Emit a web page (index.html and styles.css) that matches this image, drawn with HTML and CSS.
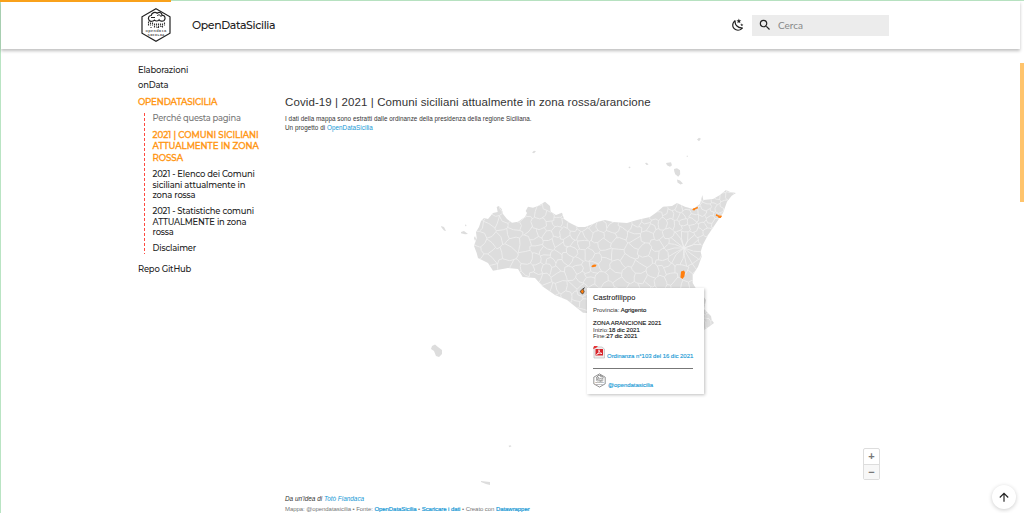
FILE: index.html
```html
<!DOCTYPE html>
<html lang="it">
<head>
<meta charset="utf-8">
<title>OpenDataSicilia</title>
<link rel="stylesheet" href="styles.css">
</head>
<body>
<svg width="0" height="0" class="defs"><defs>
<symbol id="ods" viewBox="0 0 32 36">
<path d="M16 1.800 30 9.800v16.400L16 34.200 2 26.200V9.800z" fill="#fff" stroke="#222" stroke-width="1.200"/>
<path d="M9.200 13.500c-1.800-2.500-.2-5 2-5 .5-3 4-4 6-2.300 2.500-1.800 5 .1 4.700 2.300 3.200-.6 4 3 2.200 5-1.500 1.200-4 .6-5-.7-1.400 1.600-3.500 1.500-4.700.3-1.500 1.500-4 1.500-5.200.4z" fill="#fff" stroke="#222" stroke-width="1.200"/>
<path d="M11 10.500h4m2-1.500c1.500-2 4-1 4 1" fill="none" stroke="#222" stroke-width="1"/>
<path d="M8.500 14.500v4m2-3v3m2-3v3m2-2v4m2-4v3m2-3v5m2-5v3m2-3v4m2-5v3M11 20v1m6-1v1m4-2v1" stroke="#333" stroke-width="1.100" stroke-dasharray="2 .5"/>
<text x="5.500" y="24.800" textLength="21" class="logo-text">opendata</text>
<text x="7.500" y="28.500" textLength="17" class="logo-text">SICILIA</text>
</symbol></defs></svg>
<div class="progress"></div>
<header class="header"><div class="header-inner">
<svg class="logo" width="32" height="36"><use href="#ods"/></svg>
<span class="site-title">OpenDataSicilia</span>
<svg class="moon" viewBox="0 0 24 24"><path d="m17.750 4.090-2.530 1.940.91 3.060-2.630-1.810-2.630 1.810.91-3.060-2.530-1.940L12.440 4l1.060-3 1.060 3 3.190.09m3.500 6.910-1.640 1.250.59 1.980-1.700-1.170-1.700 1.170.59-1.980L15.750 11l2.060-.05L18.500 9l.69 1.950 2.060.05m-2.280 4.950c.83-.08 1.720 1.100 1.190 1.850-.32.45-.66.87-1.080 1.270C15.170 23 8.840 23 4.940 19.070c-3.910-3.900-3.910-10.240 0-14.140.4-.4.820-.76 1.270-1.080.75-.53 1.930.36 1.850 1.190-.27 2.860.69 5.830 2.890 8.020a9.960 9.960 0 0 0 8.020 2.890m-1.640 2.020a12.080 12.080 0 0 1-7.800-3.470c-2.170-2.190-3.330-5-3.490-7.820-2.810 3.140-2.700 7.960.31 10.980 3.020 3.010 7.840 3.120 10.980.31z"/></svg>
<div class="search"><svg viewBox="0 0 24 24"><path d="M9.500 3A6.500 6.500 0 0 1 16 9.500c0 1.610-.59 3.090-1.560 4.230l.27.270h.79l5 5-1.500 1.500-5-5v-.79l-.27-.27A6.516 6.516 0 0 1 9.500 16a6.500 6.500 0 0 1 0-13m0 2C7 5 5 7 5 9.500S7 14 9.500 14 14 12 14 9.500 12 5 9.500 5z"/></svg><span>Cerca</span></div>
</div></header>
<main class="main">
<nav class="nav">
<a>Elaborazioni</a><a class="w2">onData</a><a class="active w3">OPENDATASICILIA</a>
<div class="subnav">
<a class="muted">Perché questa pagina</a>
<a class="active current">2021 | COMUNI SICILIANI<br>ATTUALMENTE IN ZONA<br>ROSSA</a>
<a class="elenco">2021 - Elenco dei Comuni<br>siciliani attualmente in<br>zona rossa</a>
<a class="stats">2021 - Statistiche comuni<br>ATTUALMENTE in zona<br>rossa</a>
<a class="disc">Disclaimer</a>
</div>
<a class="repo">Repo GitHub</a>
</nav>
<section class="chart">
<h1>Covid-19 | 2021 | Comuni siciliani attualmente in zona rossa/arancione</h1>
<p class="intro">I dati della mappa sono estratti dalle ordinanze della presidenza della regione Siciliana.<br>Un progetto di <a>OpenDataSicilia</a></p>
<div class="map">
<svg class="sicily" viewBox="285 135 600 355" width="600" height="355">
<defs><clipPath id="coast"><path id="coastPath" d="M474 246L476.700 238 476 232 479 227 481 221 484 218 488 219 493 213 497.700 212 496.700 207 498.700 206 501.700 209 503 214 507 219 512 222.700 518 221.700 525 217 527 213 525.700 211 528 206.700 533 207.700 538 206 545 201.700 550 206 550.700 211.700 556 215 562 212.700 564 219 570 223 578 227 585 227 593 224 598 221.700 605 220 613 222 627 223 637 220 650 217 657 212 663 206.700 672 206 677 203 685 206.700 693 209 700 204 702.300 195 703.300 200 713 199 720 195 726 190 730 192 736 193 731.700 195.700 727 201.700 723 213 717 221.700 708 235 702.700 245 700.700 251.700 701.700 256.700 698 266.700 692.700 275 692.700 283 698 292 703 296 706 300 704 309 711 316 711.700 320 714 323 709 326.700 704 330 696 347 687 359 678 353 650 347 633 338 609 319 587 313 583 312.700 577 308 567 300 555 295 543 286.700 535 278 522.700 277 518 269 508 268 493 270.700 488 263 478 258 476.700 253Z"/></clipPath></defs>
<use href="#coastPath" class="land"/>
<g clip-path="url(#coast)"><path id="borders" class="borders"/></g>
<g class="land">
<path d="M441 226l3 1 2 4-2-.5-2.500-3zM461 232l3-1 4 3-3 .3-4-1zM465 224.500l1.500.5-.5 1.500-1-1zM475 236l1 3-1 2-1-3zM532 152.500l2-1.800 2 .5-2 2zM628.500 167l1.500-.5.500 1.500-1.500.3zM645 163l2-.3 1.500 2-2 .3zM666 163l5-.8 1 3-2 1.500-3-1.500zM674 169l3-.8 3 2 .2 4-2 2.500-3-2.500-1-3zM677 179.500l3 1 3 3-2.500 1-3-2zM686.500 156l1-.5.500 1-1 .6zM697 139.500l2-1.700 2 1-2 2.500zM432 346l3-1.500 3 2.500 4 3v4l-3 3-3-1-2-5-3-2zM508.500 445.800l2-.5 1 1-2 .9zM481 481l9 1v3l-4-1-5-2z"/></g>
<g class="zone"><path d="M592 265.500l2-1 2.500.3-.6 1.700-3 .8-1.500-.3zM693 208.500l2.500-.8 2.300-1.200v2l-2 .5-1.500 1.500-2-.5zM716.300 214l2.700 1.500 3.200.3-1.500 2.200h-2l-1-1.500-2-.8zM681 271.500l3-1 1 2-.6 4-2 2.500-2-1.500z"/></g>
<path class="selected" d="M584.500 287.800l-1.500 1 1.200 3-1.500 2.200-1.500-1-1-1.800 2-1.700z"/>
</svg>
<div class="tooltip">
<h2>Castrofilippo</h2>
<p class="province">Provincia: <b>Agrigento</b></p>
<p class="dates"><b>ZONA ARANCIONE 2021</b><br>Inizio:<b>18 dic 2021</b><br>Fine:<b>27 dic 2021</b></p>
<div class="link-row"><svg width="12" height="14" viewBox="0 0 12 14"><path d="M1 2h8l2.500 2v9H1z" fill="#eee" stroke="#bbb" stroke-width=".7"/><path d="M2.500 4h7.500v6.500H2.500z" fill="#d8242b"/><path d="M0 4l1-3h4L3 3z" fill="#e63336"/><path d="M3.500 9.500c2-1 3-3 2.500-4.800C5.500 6 7 8.500 9 8.500c-2-.8-4 0-5.500 1z" fill="none" stroke="#fff" stroke-width=".8"/></svg><a>Ordinanza n°103 del 16 dic 2021</a></div>
<hr>
<div class="link-row second"><svg width="13" height="15"><use href="#ods"/></svg><a>@opendatasicilia</a></div>
</div>
<div class="zoom"><span>+</span><span>−</span></div>
</div>
<footer><p class="idea">Da un'idea di <a>Totò Fiandaca</a></p><p class="credits">Mappa: @opendatasicilia • Fonte: <a>OpenDataSicilia</a> • <a>Scaricare i dati</a> • Creato con <a>Datawrapper</a></p></footer>
</section>
</main>
<div class="scrollbar"></div>
<div class="top"><svg viewBox="0 0 24 24"><path d="M13 20h-2V8l-5.500 5.500-1.420-1.420L12 4.160l7.920 7.920-1.420 1.420L13 8v12z"/></svg></div>
<script src="map.js"></script>
</body>
</html>
```
FILE: styles.css
```css
* { box-sizing: border-box; }
body { margin: 0; padding: 1px 0 0 1px; width: 1024px; height: 513px; overflow: hidden; background: linear-gradient(#b9e4c3, #b9e4c3) 0 0 / 100% 1px no-repeat, linear-gradient(#b9e4c3, #b9e4c3) 0 0 / 1px 100% no-repeat, #fff; font-family: "Liberation Sans", Arial, sans-serif; color: #333; position: relative; }
h1, h2, p { margin: 0; font-weight: 400; }
.defs { position: absolute; }
.logo-text { font: 700 4px "Liberation Mono", monospace; fill: #666; }
.progress { position: absolute; left: 0; top: 0; width: 171px; height: 2px; background: #f9a11b; z-index: 3; }
.header { width: 1019px; height: 48px; box-shadow: 0 2px 3px rgba(0,0,0,.25); background: #fff; }
.header-inner { display: flex; align-items: center; height: 48px; padding-left: 139px; }
.logo { display: block; flex: none; }
.site-title { font: 500 10.900px/16px Montserrat, Inter, sans-serif; flex: none; width: 560px; padding-left: 20px; letter-spacing: -.36px; color: #222; }
.moon { width: 14px; height: 14px; fill: #222; margin-left: -1px; flex: none; }
.search { width: 137px; height: 21px; background: #ececec; margin-left: 7px; display: flex; align-items: center; padding-left: 6px; gap: 6px; color: #888; font: 10px Lato, sans-serif; }
.search svg { width: 14px; fill: #222; }
.main { display: flex; padding-left: 137px; }
.nav { width: 147px; padding-top: 16px; font: 500 8.400px/11px Montserrat, Inter, sans-serif; letter-spacing: -.17px; color: #222; white-space: nowrap; }
.nav a { display: block; }
.nav .w2 { margin-top: 4px; }
.nav .w3 { margin-top: 6px; }
.nav .active { color: #ff9510; font-size: 8.700px; letter-spacing: -.18px; -webkit-text-stroke: .3px #ff9510; }
.nav .current { letter-spacing: -.06px; }
.subnav { margin: 5px 0 0 6px; padding-left: 8.500px; height: 141px; background: repeating-linear-gradient(#ff4a40 0 3px, transparent 3px 5px) 0 0 / 1px 100% no-repeat; }
.nav .muted { color: #777; letter-spacing: -.24px; }
.nav .current { margin-top: 6px; line-height: 11.300px; }
.nav .elenco { margin-top: 5px; line-height: 10.700px; }
.nav .stats { margin-top: 5px; line-height: 10.700px; }
.nav .disc { margin-top: 5px; }
.nav .repo { margin-top: 10px; }
.chart { width: 600px; padding-top: 46px; }
.chart a { color: #1698d5; }
.chart h1 { font-size: 11.500px; line-height: 14px; letter-spacing: .1px; white-space: nowrap; }
.intro { font-size: 6.300px; line-height: 9px; margin-top: 5px; letter-spacing: .045px; }
.map { position: relative; height: 355px; margin-top: 3px; }
.sicily { display: block; }
.land { fill: #ddd; }
.borders { fill: none; stroke: #f0f0f0; stroke-width: .8; stroke-linejoin: round; }
.zone { fill: #ff7f0e; }
.selected { fill: #ff7f0e; stroke: #333; stroke-width: .7; }
.tooltip { position: absolute; left: 302px; top: 153px; width: 117px; height: 106px; padding: 5px 11px 0 6px; background: #fff; box-shadow: 1px 1px 3px rgba(0,0,0,.25); font-size: 6px; line-height: 6.500px; white-space: nowrap; }
.tooltip h2 { font-size: 7.400px; line-height: 9px; letter-spacing: .1px; color: #222; -webkit-text-stroke: .1px #222; }
.province { margin-top: 5px; line-height: 7px; }
.tooltip b { font-weight: 400; color: #111; -webkit-text-stroke: .12px #111; }
.dates { margin-top: 6px; }
.link-row { display: flex; align-items: flex-end; gap: 2px; height: 14px; margin-top: 5px; }
.link-row svg { flex: none; }
.link-row a { -webkit-text-stroke: .12px #1698d5; line-height: 5px; letter-spacing: -.04px; }
.tooltip hr { margin: 9px 0 0; border: 0; border-top: 1px solid #777; width: 100px; }
.second { height: 15px; margin-top: 4px; }
.zoom { position: absolute; right: 5px; bottom: 10px; width: 17px; height: 32px; border: 1px solid #ddd; border-radius: 2px; display: grid; grid-template-rows: 1fr 1fr; text-align: center; font: 700 11px/14px "Liberation Sans", sans-serif; color: #777; }
.zoom span + span { border-top: 1px solid #ddd; background: #f7f7f7; }
footer { margin-top: 5px; font-size: 6.400px; line-height: 8px; white-space: nowrap; }
.idea { font-style: italic; }
.credits { margin-top: 2px; font-size: 6px; letter-spacing: -.065px; color: #777; }
.credits a { -webkit-text-stroke: .2px #1698d5; }
.scrollbar { position: absolute; right: 0; top: 63px; width: 4px; height: 139px; background: #ffc46c; }
.top { position: absolute; left: 992px; top: 485px; width: 24px; height: 24px; background: #fff; border-radius: 50%; box-shadow: 0 1px 4px rgba(0,0,0,.2); display: grid; place-items: center; }
.top svg { width: 14px; height: 14px; fill: #222; }
```
FILE: map.js
```js
// Municipal boundaries: Voronoi cells with slightly irregular edges.
let state = 17;
const rnd = () => (state = (state * 16807) % 2147483647) / 2147483647;
const etna = [684, 248];
const pts = [];
for (let i = 0; i < 16; i++) {
  const a = i * Math.PI / 8 + rnd() * .12;
  pts.push([etna[0] + 13 * Math.cos(a), etna[1] + 13 * Math.sin(a)]);
}
for (let tries = 0; tries < 12000; tries++) {
  const x = 468 + rnd() * 272, y = 188 + rnd() * 175;
  if (Math.hypot(x - etna[0], y - etna[1]) < 18) continue;
  const gap = (x < 535 ? 11 : x > 600 && x < 650 && y > 230 ? 11 : x > 680 ? 6.5 : 8.5) * (.7 + rnd() * .8);
  if (pts.every(p => Math.hypot(p[0] - x, p[1] - y) > gap)) pts.push([x, y]);
}
const seen = new Set();
let d = '';
const wobble = (x, y) => Math.sin(x * 12.9 + y * 78.2) * 1.7;
for (const p of pts) {
  let cell = [[p[0] - 25, p[1] - 25], [p[0] + 25, p[1] - 25], [p[0] + 25, p[1] + 25], [p[0] - 25, p[1] + 25]];
  for (const q of pts) {
    if (p === q || Math.hypot(p[0] - q[0], p[1] - q[1]) > 60) continue;
    const nx = q[0] - p[0], ny = q[1] - p[1];
    const side = v => (v[0] - (p[0] + q[0]) / 2) * nx + (v[1] - (p[1] + q[1]) / 2) * ny;
    const next = [];
    cell.forEach((v, i) => {
      const w = cell[(i + 1) % cell.length], a = side(v), b = side(w);
      if (a <= 0) next.push(v);
      if (a * b < 0) next.push([v[0] + (w[0] - v[0]) * a / (a - b), v[1] + (w[1] - v[1]) * a / (a - b)]);
    });
    cell = next;
  }
  cell.forEach((v, i) => {
    const w = cell[(i + 1) % cell.length];
    const mx = +((v[0] + w[0]) / 2).toFixed(1), my = +((v[1] + w[1]) / 2).toFixed(1);
    const key = mx + ',' + my;
    if (seen.has(key)) return;
    seen.add(key);
    const k = Math.hypot(v[0] - w[0], v[1] - w[1]) > 4 ? 1 : .2;
    d += `M${v[0].toFixed(1)} ${v[1].toFixed(1)}L${(mx + k * wobble(mx, my)).toFixed(1)} ${(my + k * wobble(my, mx)).toFixed(1)} ${w[0].toFixed(1)} ${w[1].toFixed(1)}`;
  });
}
document.getElementById('borders').setAttribute('d', d);
```
